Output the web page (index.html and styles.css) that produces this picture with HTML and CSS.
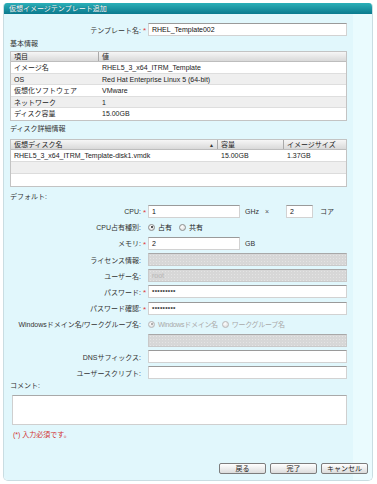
FILE: index.html
```html
<!DOCTYPE html>
<html lang="ja">
<head>
<meta charset="utf-8">
<title>仮想イメージテンプレート追加</title>
<link rel="stylesheet" href="styles.css">
</head>
<body>
<div class="panel">
  <div class="titlebar">仮想イメージテンプレート追加</div>
  <div class="content">
    <div class="frow top">
      <span class="lbl">テンプレート名:</span><span class="req">*</span>
      <span class="inp wide">RHEL_Template002</span>
    </div>

    <div class="section s1">基本情報</div>
    <div class="grid info">
      <div class="ghead"><span class="c1">項目</span><span class="c2">値</span></div>
      <div class="grow"><span class="c1">イメージ名</span><span class="c2">RHEL5_3_x64_ITRM_Template</span></div>
      <div class="grow alt"><span class="c1">OS</span><span class="c2">Red Hat Enterprise Linux 5 (64-bit)</span></div>
      <div class="grow"><span class="c1">仮想化ソフトウェア</span><span class="c2">VMware</span></div>
      <div class="grow alt"><span class="c1">ネットワーク</span><span class="c2">1</span></div>
      <div class="grow"><span class="c1">ディスク容量</span><span class="c2">15.00GB</span></div>
    </div>

    <div class="section s2">ディスク詳細情報</div>
    <div class="grid disk">
      <div class="ghead"><span class="d1">仮想ディスク名<span class="sort">▲</span></span><span class="d2">容量</span><span class="d3">イメージサイズ</span></div>
      <div class="drow"><span class="d1">RHEL5_3_x64_ITRM_Template-disk1.vmdk</span><span class="d2">15.00GB</span><span class="d3">1.37GB</span></div>
      <div class="drow alt"></div>
      <div class="drow"></div>
    </div>

    <div class="section s3">デフォルト:</div>
    <div class="form">
      <div class="frow">
        <span class="lbl">CPU:</span><span class="req">*</span>
        <span class="inp mid">1</span><span class="unit ghz">GHz</span><span class="times">×</span>
        <span class="inp small">2</span><span class="unit core">コア</span>
      </div>
      <div class="frow">
        <span class="lbl">CPU占有種別:</span><span class="req"></span>
        <span class="radio on"></span><span class="rtext">占有</span>
        <span class="radio"></span><span class="rtext">共有</span>
      </div>
      <div class="frow">
        <span class="lbl">メモリ:</span><span class="req">*</span>
        <span class="inp mid">2</span><span class="unit ghz">GB</span>
      </div>
      <div class="frow">
        <span class="lbl">ライセンス情報:</span><span class="req"></span>
        <span class="inp wide disabled"></span>
      </div>
      <div class="frow">
        <span class="lbl">ユーザー名:</span><span class="req"></span>
        <span class="inp wide disabled ph">root</span>
      </div>
      <div class="frow">
        <span class="lbl">パスワード:</span><span class="req">*</span>
        <span class="inp wide pw">*********</span>
      </div>
      <div class="frow">
        <span class="lbl">パスワード確認:</span><span class="req">*</span>
        <span class="inp wide pw">*********</span>
      </div>
      <div class="frow">
        <span class="lbl">Windowsドメイン名/ワークグループ名:</span><span class="req"></span>
        <span class="radio on dis"></span><span class="rtext dis narrow">Windowsドメイン名</span>
        <span class="radio dis"></span><span class="rtext dis narrow">ワークグループ名</span>
      </div>
      <div class="frow">
        <span class="lbl"></span><span class="req"></span>
        <span class="inp wide disabled"></span>
      </div>
      <div class="frow">
        <span class="lbl">DNSサフィックス:</span><span class="req"></span>
        <span class="inp wide"></span>
      </div>
      <div class="frow">
        <span class="lbl">ユーザースクリプト:</span><span class="req"></span>
        <span class="inp wide"></span>
      </div>
    </div>

    <div class="section s4">コメント:</div>
    <div class="textarea"></div>
    <div class="note">(*) 入力必須です。</div>

    <div class="buttons">
      <span class="btn">戻る</span>
      <span class="btn">完了</span>
      <span class="btn">キャンセル</span>
    </div>
  </div>
</div>
</body>
</html>
```

FILE: styles.css
```css
* { box-sizing: border-box; }
html, body { margin: 0; padding: 0; background: #ffffff; }
body {
  font-family: "Liberation Sans", "Noto Sans CJK JP", sans-serif;
  font-size: 7px;
  color: #222;
}
.panel {
  margin: 3px 0 0 3px;
  width: 370px;
  height: 478px;
  border: 1px solid #c9dde2;
  border-top: none;
  border-radius: 4px 4px 5px 5px;
  overflow: hidden;
  display: flex;
  flex-direction: column;
}
.titlebar {
  height: 11px;
  line-height: 11px;
  padding-left: 5px;
  color: #fff;
  font-size: 7px;
  background: linear-gradient(#2bb0b8, #0b7a8e);
  text-shadow: 0 0 1px #05505e;
}
.content {
  flex: 1;
  padding: 9px 0 0 6px;
  background: linear-gradient(to right, #e1f7fc 0, #e1f7fc 349px, #eafbfe 349px);
  display: flex;
  flex-direction: column;
}
.frow {
  display: flex;
  align-items: center;
  height: 13px;
}
.lbl {
  width: 131px;
  text-align: right;
  white-space: nowrap;
  color: #333;
}
.req {
  width: 7px;
  text-align: center;
  color: #e03a3a;
  font-size: 8px;
  line-height: 13px;
  padding-top: 2px;
}
.inp {
  height: 13px;
  line-height: 11px;
  padding-left: 3px;
  background: #fff;
  border: 1px solid #d2d2d2;
  border-top-color: #9a9a9a;
  color: #111;
  white-space: nowrap;
  overflow: hidden;
}
.inp.wide { width: 199px; }
.inp.mid { width: 92px; }
.inp.small { width: 27px; }
.inp.disabled {
  background-color: #d7d7d7;
  background-image: radial-gradient(#e4e4e4 0.5px, transparent 0.6px);
  background-size: 3px 3px;
  border-color: #c9c9c9;
  border-top-color: #a8a8a8;
}
.inp.ph { color: #b5b5b5; }
.inp.pw { font-size: 6px; letter-spacing: 0.3px; line-height: 12px; font-weight: bold; }
.unit { color: #333; }
.ghz { margin-left: 5px; }
.times { margin-left: 6px; margin-right: 17px; color: #555; }
.core { margin-left: 7px; }
.radio {
  width: 7px;
  height: 7px;
  border-radius: 50%;
  border: 1px solid #8e8e8e;
  background: radial-gradient(circle at 40% 35%, #ffffff, #d4d4d4);
  position: relative;
  flex: none;
}
.radio.on::after {
  content: "";
  position: absolute;
  left: 1.5px;
  top: 1.5px;
  width: 2px;
  height: 2px;
  border-radius: 50%;
  background: #222;
}
.radio.dis { border-color: #b8b8b8; }
.radio.on.dis::after { background: #9a9a9a; }
.rtext { margin-left: 3px; margin-right: 7px; color: #222; }
.rtext.dis { color: #a9a9a9; }
.rtext.narrow { letter-spacing: -0.3px; margin-right: 4px; }

.section { height: 10px; line-height: 10px; color: #333; }
.s1 { margin-top: 3px; }
.s2 { margin-top: 3px; }
.s3 { margin-top: 5px; }
.s4 { margin-top: 2px; }

.grid {
  width: 337px;
  border: 1px solid #c3c3c3;
  background: #fff;
}
.info { margin-top: 2px; }
.disk { margin-top: 5px; }
.ghead {
  display: flex;
  height: 10px;
  line-height: 10px;
  background: linear-gradient(#f6f6f6, #d9d9d9);
  border-bottom: 1px solid #bdbdbd;
}
.ghead span { padding-left: 3px; white-space: nowrap; }
.ghead .c1, .ghead .d1, .ghead .d2 { border-right: 1px solid #a9a9a9; }
.c1 { width: 88px; padding-left: 3px; white-space: nowrap; }
.c2 { flex: 1; padding-left: 3px; white-space: nowrap; }
.grow {
  display: flex;
  height: 11.5px;
  line-height: 11px;
  border-bottom: 1px solid #dedede;
}
.grow:last-child { border-bottom: none; }
.alt { background: #efefef; }
.d1 { width: 207px; padding-left: 3px; white-space: nowrap; position: relative; }
.d2 { width: 66px; padding-left: 3px; white-space: nowrap; }
.d3 { flex: 1; padding-left: 3px; white-space: nowrap; }
.sort {
  position: absolute;
  right: 3px;
  top: 0;
  font-size: 5px;
  color: #333;
}
.drow {
  display: flex;
  height: 12px;
  line-height: 12px;
  border-bottom: 1px solid #dcdcdc;
}
.drow:last-child { border-bottom: none; }

.form {
  margin-top: 3px;
  display: flex;
  flex-direction: column;
  gap: 3.2px;
}
.textarea {
  margin-top: 4px;
  margin-left: 2px;
  width: 335px;
  height: 30px;
  background: #fff;
  border: 1px solid #cfcfcf;
  border-top-color: #a9a9a9;
}
.note {
  margin-top: 5px;
  margin-left: 3px;
  height: 10px;
  line-height: 10px;
  color: #d23232;
}
.buttons {
  margin-top: 23px;
  display: flex;
  justify-content: flex-end;
  gap: 4px;
  padding-right: 4px;
}
.btn {
  width: 47px;
  height: 11px;
  line-height: 9px;
  text-align: center;
  border: 1px solid #7d7d7d;
  border-radius: 2px;
  background: linear-gradient(#ffffff, #dcdcdc);
  color: #222;
}
```
